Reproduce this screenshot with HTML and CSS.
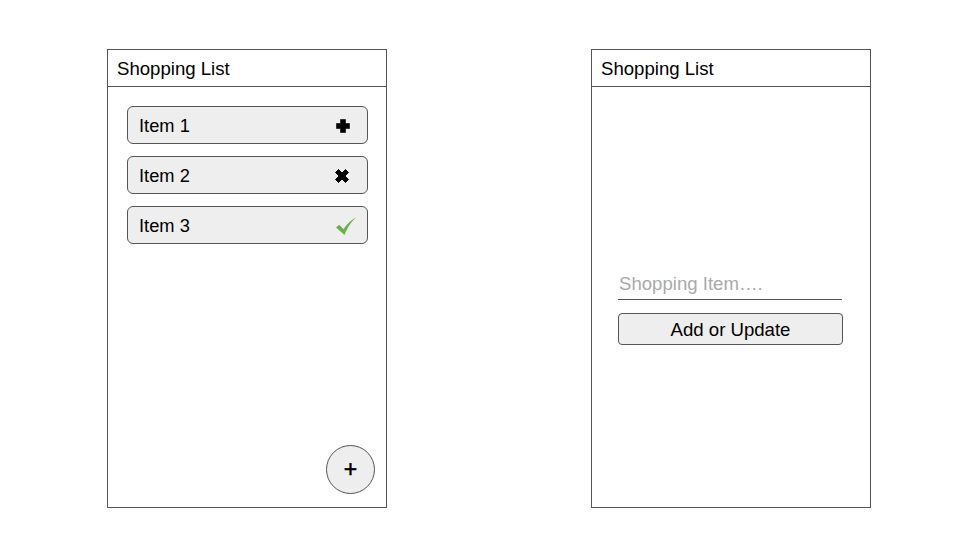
FILE: index.html
```html
<!DOCTYPE html>
<html>
<head>
<meta charset="utf-8">
<link rel="stylesheet" href="styles.css">
</head>
<body>
<div class="stage">
  <div class="phone">
    <div class="header">Shopping List</div>
    <div class="content list">
      <div class="item"><span>Item 1</span>
        <svg class="icon" width="16" height="16" viewBox="0 0 16 16"><path d="M5.5 1.5h5v4h4v5h-4v4h-5v-4h-4v-5h4z" fill="#000" stroke="#000" stroke-width="0.6" stroke-linejoin="round"/></svg>
      </div>
      <div class="item"><span>Item 2</span>
        <svg class="icon" width="18" height="18" viewBox="0 0 18 18"><path d="M2.5 5.5L5.5 2.5 9 6 12.5 2.5 15.5 5.5 12 9 15.5 12.5 12.5 15.5 9 12 5.5 15.5 2.5 12.5 6 9z" fill="#000" stroke="#000" stroke-width="1" stroke-linejoin="round"/></svg>
      </div>
      <div class="item"><span>Item 3</span>
        <svg class="icon check" width="24" height="22" viewBox="0 0 24 22"><path d="M2 12.5l3.2-2.8 4.3 4.6C13 9 17 5 22.5 2c-5 4.5-9 10-12 18z" fill="#6ab04c"/></svg>
      </div>
      <div class="spacer"></div>
      <div class="fab-row"><div class="fab">+</div></div>
    </div>
  </div>
  <div class="phone">
    <div class="header">Shopping List</div>
    <div class="content form">
      <div class="input">Shopping Item….</div>
      <div class="button">Add or Update</div>
    </div>
  </div>
</div>
</body>
</html>
```
FILE: styles.css
```css
html, body {
  margin: 0;
  padding: 0;
  background: #fff;
  font-family: "Liberation Sans", Arial, sans-serif;
  color: #000;
}
.stage {
  display: flex;
  gap: 204px;
  padding: 49px 0 0 107px;
}
.phone {
  width: 278px;
  height: 457px;
  border: 1px solid #555;
  display: flex;
  flex-direction: column;
}
.header {
  height: 36px;
  border-bottom: 1px solid #555;
  font-size: 18.6px;
  line-height: 38px;
  padding-left: 9px;
}
.content {
  flex: 1;
  display: flex;
  flex-direction: column;
}
.list {
  padding: 19px 18px 13px 19px;
  gap: 12px;
}
.item {
  border: 1px solid #555;
  border-radius: 6px;
  background: #eeeeee;
  display: flex;
  align-items: center;
  justify-content: space-between;
  padding: 1px 16px 0 11px;
  box-sizing: content-box;
  height: 35px;
  font-size: 18.3px;
}
.icon { display: block; }
.check { margin-right: -7px; margin-top: 1px; }
.spacer { flex: 1; }
.fab-row {
  display: flex;
  justify-content: flex-end;
  margin-right: -7px;
}
.fab {
  width: 47px;
  height: 47px;
  border: 1px solid #555;
  border-radius: 50%;
  background: #eeeeee;
  display: flex;
  align-items: center;
  justify-content: center;
  font-size: 23px;
  line-height: 1;
  -webkit-text-stroke: 0.5px #000;
}
.form {
  padding: 184px 27px 0 26px;
}
.input {
  height: 27px;
  padding-top: 1px;
  border-bottom: 1px solid #555;
  color: #aaaaaa;
  font-size: 18.6px;
  line-height: 24px;
  padding-left: 1px;
  margin-right: 1px;
}
.button {
  margin-top: 13px;
  height: 30px;
  border: 1px solid #555;
  border-radius: 4px;
  background: #eeeeee;
  font-size: 18.6px;
  line-height: 32px;
  text-align: center;
}
```
